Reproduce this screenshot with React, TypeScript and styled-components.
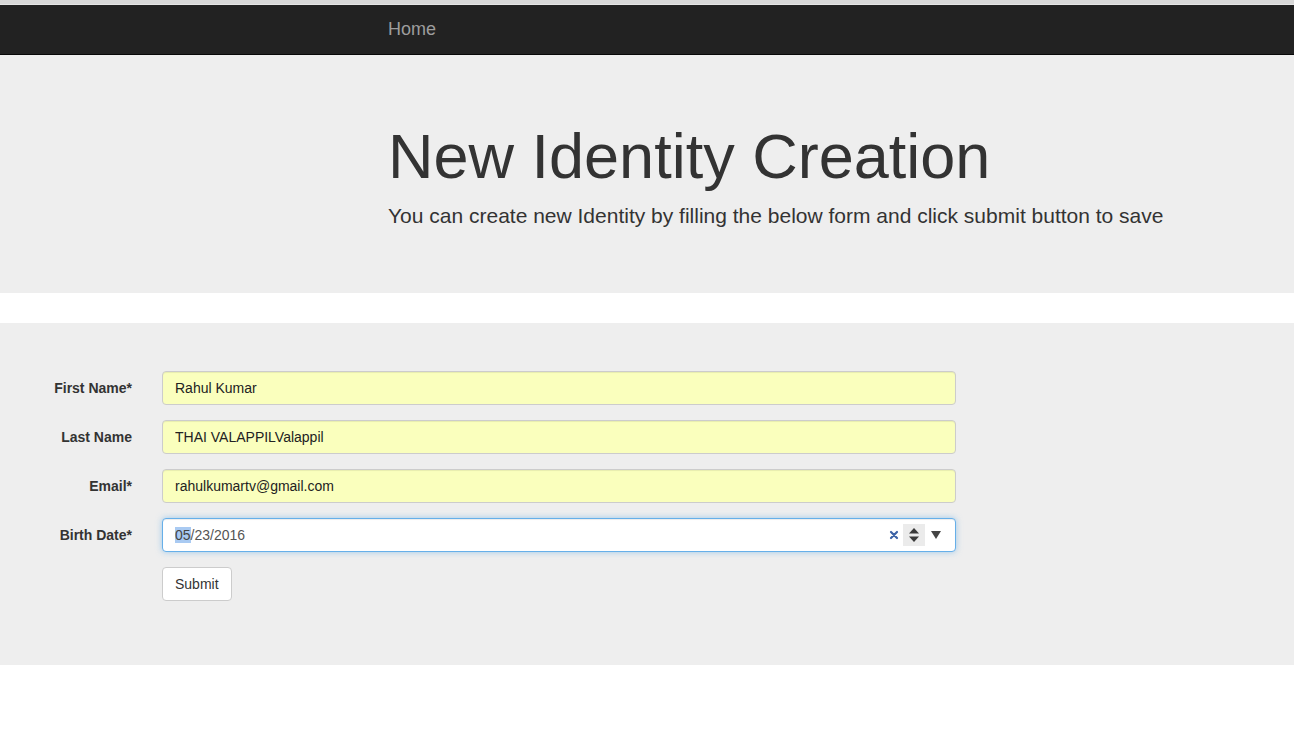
import React from 'react'
import styled, { createGlobalStyle } from 'styled-components'

const GlobalStyle = createGlobalStyle`
  html, body {
    margin: 0;
    padding: 0;
    background: #fff;
    font-family: "Liberation Sans", Arial, Helvetica, sans-serif;
    font-size: 14px;
    line-height: 1.42857;
    color: #333;
  }
  * {
    box-sizing: border-box;
  }
`

const fields = [
  { label: 'First Name*', value: 'Rahul Kumar' },
  { label: 'Last Name', value: 'THAI VALAPPILValappil' },
  { label: 'Email*', value: 'rahulkumartv@gmail.com' },
]

export default function App() {
  return (
    <>
      <GlobalStyle />
      <TopStrip />
      <Navbar>
        <Inner>
          <Brand href="#">Home</Brand>
        </Inner>
      </Navbar>

      <Jumbotron>
        <Inner>
          <Title>New Identity Creation</Title>
          <Lead>You can create new Identity by filling the below form and click submit button to save</Lead>
        </Inner>
      </Jumbotron>

      <FormPanel>
        {fields.map((f) => (
          <FormRow key={f.label}>
            <Label>{f.label}</Label>
            <Field>
              <TextInput readOnly value={f.value} />
            </Field>
          </FormRow>
        ))}

        <FormRow>
          <Label>Birth Date*</Label>
          <Field>
            <DateBox>
              <DateText>
                <Selected>05</Selected>/23/2016
              </DateText>
              <DateControls>
                <ClearIcon viewBox="0 0 10 10">
                  <path d="M2 2 L8 8 M8 2 L2 8" stroke="#3c62a6" strokeWidth="2.2" strokeLinecap="round" />
                </ClearIcon>
                <Spinner>
                  <svg width="12" height="16" viewBox="0 0 12 16">
                    <path d="M6 1 L11 6.5 H1 Z" fill="#3a3a3a" />
                    <path d="M6 15 L11 9.5 H1 Z" fill="#3a3a3a" />
                  </svg>
                </Spinner>
                <svg width="12" height="10" viewBox="0 0 12 10">
                  <path d="M1 1 H11 L6 9 Z" fill="#444" />
                </svg>
              </DateControls>
            </DateBox>
          </Field>
        </FormRow>

        <FormRow>
          <span />
          <Field>
            <Button type="button">Submit</Button>
          </Field>
        </FormRow>
      </FormPanel>
    </>
  )
}

const TopStrip = styled.div`
  height: 5px;
  background: #d8d8d8;
  border-bottom: 1px solid #e6e6e6;
`

const Navbar = styled.nav`
  height: 50px;
  background: #222;
  border-bottom: 1px solid #080808;
`

const Inner = styled.div`
  padding-left: 388px;
`

const Brand = styled.a`
  display: inline-block;
  padding: 14px 0 15px;
  font-size: 18px;
  line-height: 20px;
  color: #9d9d9d;
  text-decoration: none;
`

const Jumbotron = styled.section`
  background: #eee;
  padding: 47px 0 47px;
  margin-bottom: 30px;
`

const Title = styled.h1`
  margin: 20px 0 10px;
  font-size: 63px;
  font-weight: 500;
  line-height: 1.1;
  color: #333;
`

const Lead = styled.p`
  margin: 0 0 15px;
  font-size: 21px;
  font-weight: 200;
  line-height: 30px;
  color: #333;
`

const FormPanel = styled.section`
  background: #eee;
  padding: 48px 0 49px;
`

const FormRow = styled.div`
  display: grid;
  grid-template-columns: 147px 824px;
  margin-bottom: 15px;
`

const Label = styled.label`
  padding: 7px 15px 0 0;
  text-align: right;
  font-weight: bold;
  font-size: 14px;
  line-height: 20px;
  color: #333;
`

const Field = styled.div`
  padding: 0 15px;
`

const TextInput = styled.input`
  display: block;
  width: 100%;
  height: 34px;
  padding: 6px 12px;
  font-family: inherit;
  font-size: 14px;
  line-height: 20px;
  color: #222;
  background: #faffbd;
  border: 1px solid #ccc;
  border-radius: 4px;
  box-shadow: inset 0 1px 1px rgba(0, 0, 0, 0.075);
  outline: none;
`

const DateBox = styled.div`
  display: flex;
  align-items: center;
  justify-content: space-between;
  height: 34px;
  padding: 6px 12px;
  background: #fff;
  border: 1px solid #66afe9;
  border-radius: 4px;
  box-shadow: inset 0 1px 1px rgba(0, 0, 0, 0.075), 0 0 6px rgba(102, 175, 233, 0.6);
  color: #555;
  font-size: 14px;
  line-height: 20px;
`

const DateText = styled.span`
  color: #555;
`

const Selected = styled.span`
  background: #a9caf2;
  color: #444;
`

const DateControls = styled.div`
  display: flex;
  align-items: center;
  gap: 3px;
  margin-right: 1px;
`

const ClearIcon = styled.svg`
  width: 10px;
  height: 10px;
  margin-right: 1px;
`

const Spinner = styled.div`
  display: flex;
  align-items: center;
  justify-content: center;
  width: 22px;
  height: 22px;
  background: #ebebeb;
  margin-right: 2px;
`

const Button = styled.button`
  height: 34px;
  padding: 6px 12px;
  font-family: inherit;
  font-size: 14px;
  line-height: 20px;
  color: #333;
  background: #fff;
  border: 1px solid #ccc;
  border-radius: 4px;
  cursor: pointer;
`
